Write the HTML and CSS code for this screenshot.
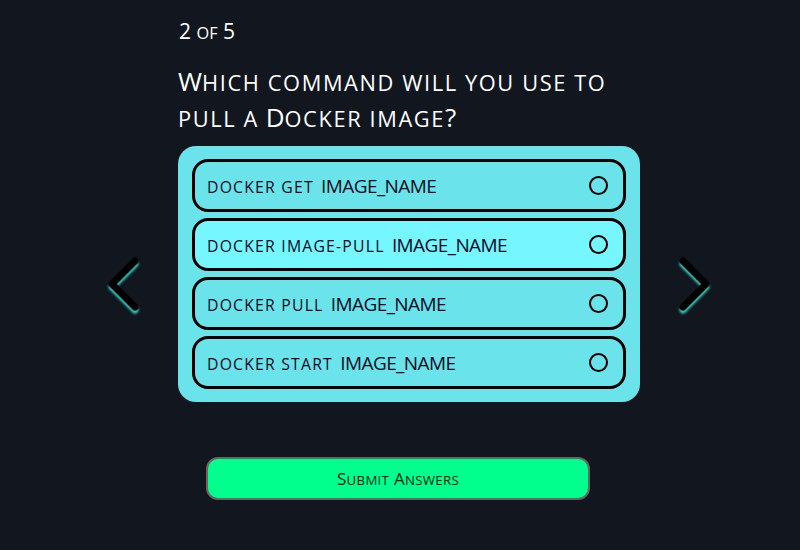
FILE: index.html
```html
<!DOCTYPE html>
<html>
<head>
<meta charset="utf-8">
<link rel="stylesheet" href="styles.css">
</head>
<body>
<div class="page">
  <div class="row">
    <button class="arrow arrow-left" aria-label="Previous">
      <svg width="40" height="64" viewBox="0 0 40 64"><polyline points="28,6 5,29 28,52" fill="none" stroke="#000" stroke-width="7" stroke-linecap="round" stroke-linejoin="round"/></svg>
    </button>
    <div class="quiz">
      <div class="counter">2 <span class="sc">of</span> 5</div>
      <h1 class="question">W<span class="sc">hich command will you use to</span> <span class="sc">pull a</span> D<span class="sc">ocker image</span>?</h1>
      <div class="card">
        <label class="option"><span class="opt-text"><span class="sc">docker get</span> IMAGE_NAME</span><span class="radio"></span></label>
        <label class="option hover"><span class="opt-text"><span class="sc">docker image-pull</span> IMAGE_NAME</span><span class="radio"></span></label>
        <label class="option"><span class="opt-text"><span class="sc">docker pull</span> IMAGE_NAME</span><span class="radio"></span></label>
        <label class="option"><span class="opt-text"><span class="sc">docker start</span> IMAGE_NAME</span><span class="radio"></span></label>
      </div>
    </div>
    <button class="arrow arrow-right" aria-label="Next">
      <svg width="40" height="64" viewBox="0 0 40 64"><polyline points="10,6 33,29 10,52" fill="none" stroke="#000" stroke-width="7" stroke-linecap="round" stroke-linejoin="round"/></svg>
    </button>
  </div>
  <div class="submit-row">
    <button class="submit">S<span class="sc">ubmit</span> A<span class="sc">nswers</span></button>
  </div>
</div>
</body>
</html>
```

FILE: styles.css
```css
html, body {
  margin: 0;
  padding: 0;
  background: #12161f;
  height: 100%;
}
body {
  font-family: "Open Sans", Lato, sans-serif;
  color: #fff;
}
.sc {
  text-transform: uppercase;
  font-size: 0.78em;
}
.page {
  display: flex;
  flex-direction: column;
  padding-top: 17px;
}
.row {
  display: flex;
  align-items: flex-end;
  padding-left: 107px;
}
.arrow {
  background: none;
  border: none;
  padding: 0;
  width: 40px;
  height: 64px;
  display: flex;
  align-items: center;
  justify-content: center;
  margin-bottom: 83px;
}
.arrow svg {
  filter: drop-shadow(0 3px 1px #2fc9bd);
  overflow: visible;
}
.arrow-left { margin-right: 31px; }
.arrow-right { margin-left: 33px; }
.quiz {
  width: 462px;
  display: flex;
  flex-direction: column;
}
.counter {
  font-size: 21px;
  line-height: 28px;
  margin-left: 1px;
}
.question {
  margin: 17px 0 10px 0;
  font-weight: 400;
  font-size: 26px;
  line-height: 34px;
}
.question .sc {
  font-size: 0.84em;
  letter-spacing: 1.6px;
}
.card {
  background: #6ae4ea;
  border-radius: 18px;
  padding: 13px 14px;
  display: flex;
  flex-direction: column;
  gap: 6px;
}
.option {
  height: 47px;
  border: 3px solid #000;
  border-radius: 16px;
  display: flex;
  align-items: center;
  justify-content: space-between;
  padding: 0 15px 0 12px;
  color: #0b0b25;
}
.option.hover {
  background: #76f7ff;
}
.opt-text {
  font-size: 19px;
  letter-spacing: -0.6px;
}
.opt-text .sc {
  font-size: 0.83em;
  letter-spacing: 1.2px;
  margin-right: 3px;
}
.radio {
  width: 15px;
  height: 15px;
  border: 2px solid #000;
  border-radius: 50%;
}
.submit-row {
  padding-left: 206px;
  margin-top: 55px;
}
.submit {
  width: 384px;
  height: 43px;
  background: #00ff8c;
  border: 2px solid #666;
  border-radius: 12px;
  font-family: "Open Sans", Lato, sans-serif;
  font-size: 17px;
  letter-spacing: 0.3px;
  color: #0b1a14;
}
```
